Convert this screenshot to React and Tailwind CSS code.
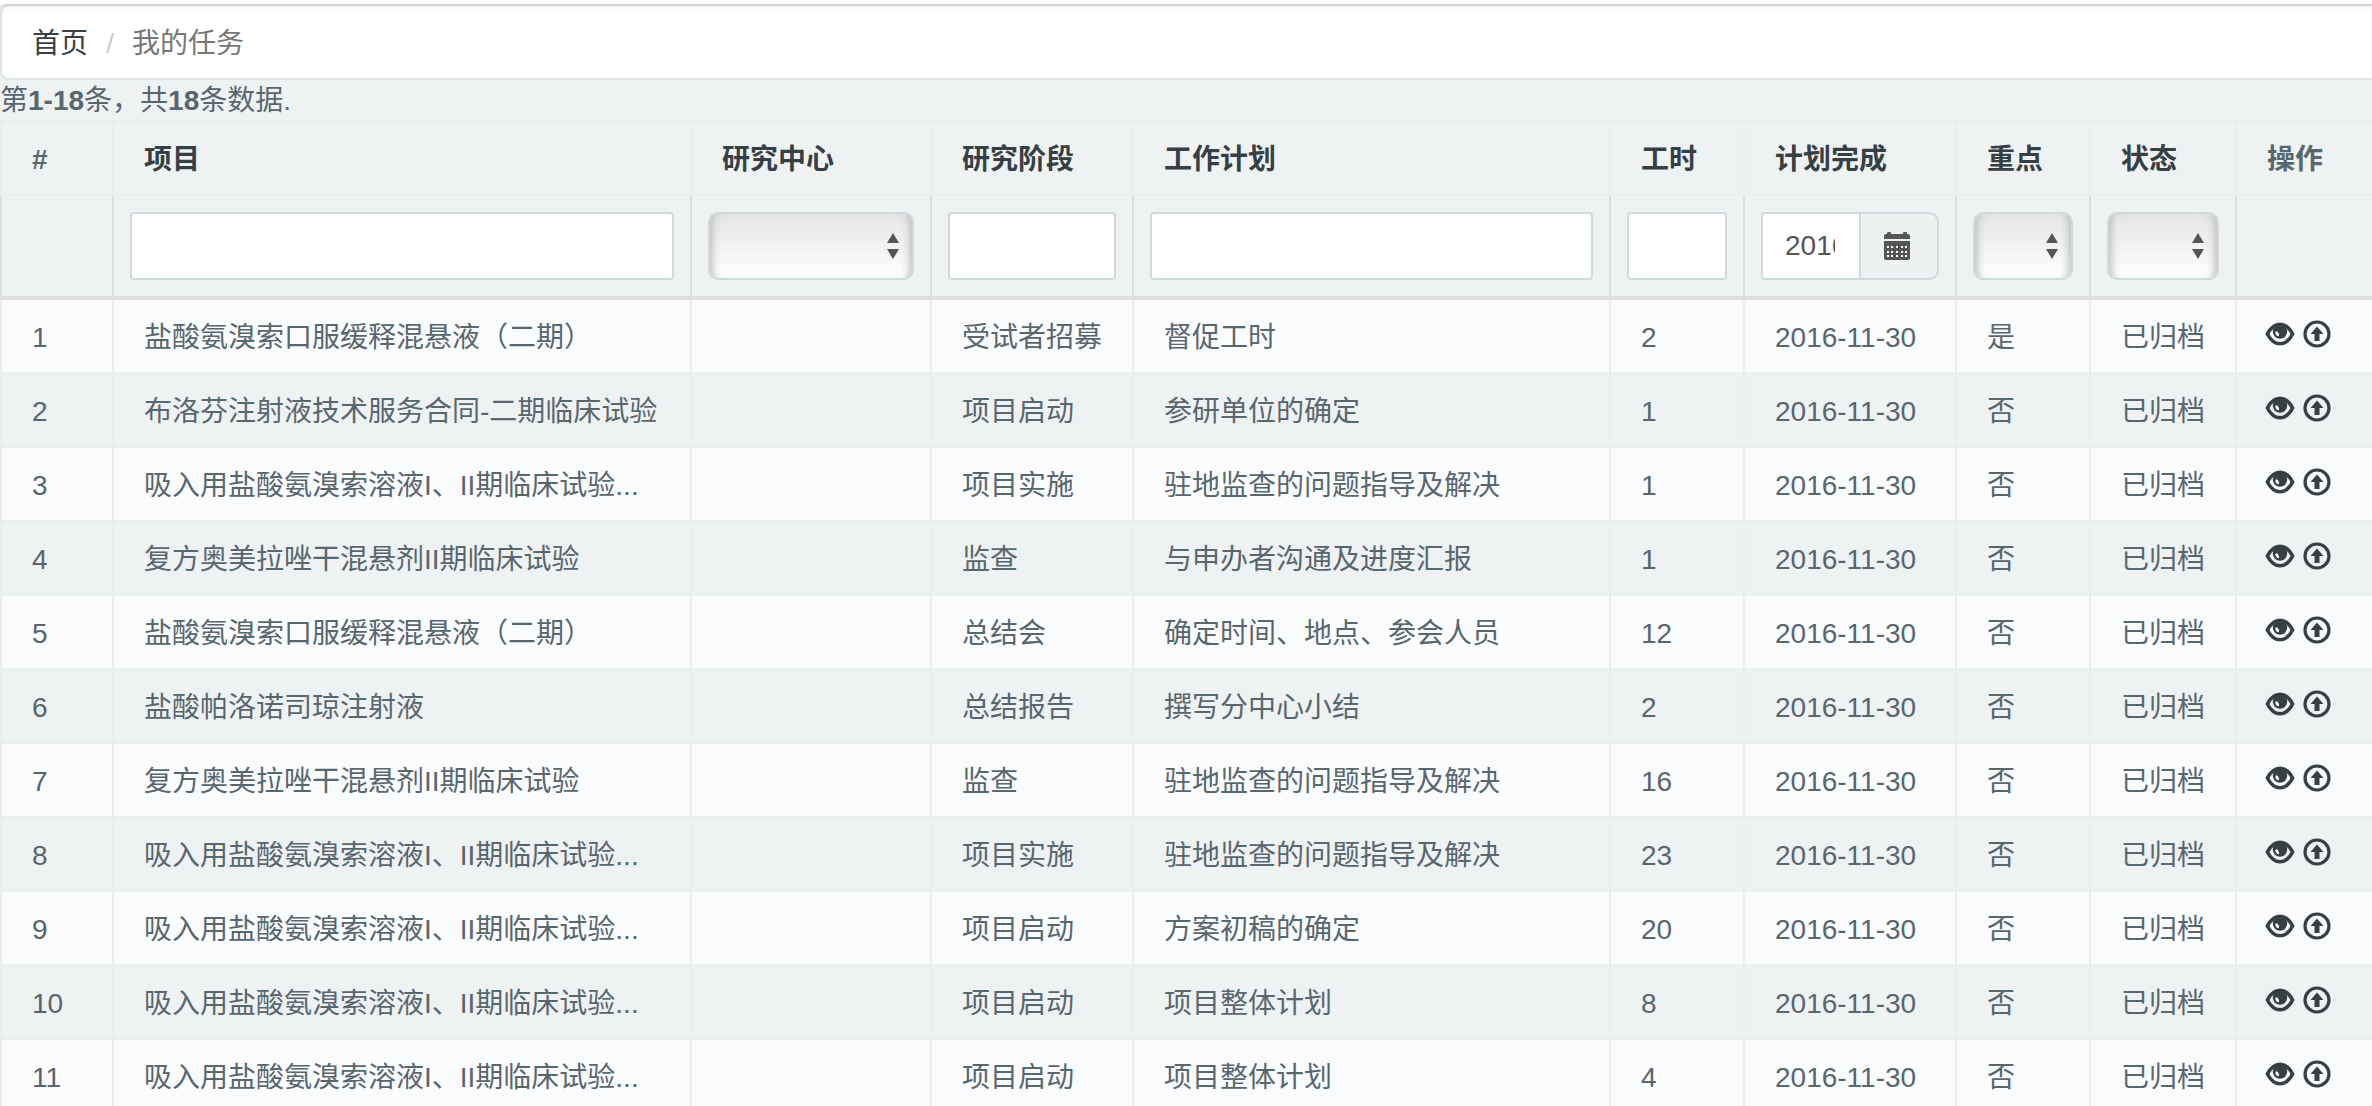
import React, { useState } from "react";

const columns = [
  { key: "id", title: "#", width: "w-[112px]", plain: true },
  { key: "project", title: "项目", width: "w-[578px]", filter: "text" },
  { key: "center", title: "研究中心", width: "w-[240px]", filter: "select" },
  { key: "stage", title: "研究阶段", width: "w-[202px]", filter: "text" },
  { key: "plan", title: "工作计划", width: "", filter: "text" },
  { key: "hours", title: "工时", width: "w-[134px]", filter: "text" },
  { key: "date", title: "计划完成", width: "w-[212px]", filter: "date" },
  { key: "important", title: "重点", width: "w-[134px]", filter: "select", options: ["是", "否"] },
  { key: "status", title: "状态", width: "w-[146px]", filter: "select", options: ["已归档"] },
  { key: "actions", title: "操作", width: "w-[137px]", plain: true },
];

const tasks = [
  { id: 1, project: "盐酸氨溴索口服缓释混悬液（二期）", stage: "受试者招募", plan: "督促工时", hours: 2, important: "是" },
  { id: 2, project: "布洛芬注射液技术服务合同-二期临床试验", stage: "项目启动", plan: "参研单位的确定", hours: 1, important: "否" },
  { id: 3, project: "吸入用盐酸氨溴索溶液I、II期临床试验...", stage: "项目实施", plan: "驻地监查的问题指导及解决", hours: 1, important: "否" },
  { id: 4, project: "复方奥美拉唑干混悬剂II期临床试验", stage: "监查", plan: "与申办者沟通及进度汇报", hours: 1, important: "否" },
  { id: 5, project: "盐酸氨溴索口服缓释混悬液（二期）", stage: "总结会", plan: "确定时间、地点、参会人员", hours: 12, important: "否" },
  { id: 6, project: "盐酸帕洛诺司琼注射液", stage: "总结报告", plan: "撰写分中心小结", hours: 2, important: "否" },
  { id: 7, project: "复方奥美拉唑干混悬剂II期临床试验", stage: "监查", plan: "驻地监查的问题指导及解决", hours: 16, important: "否" },
  { id: 8, project: "吸入用盐酸氨溴索溶液I、II期临床试验...", stage: "项目实施", plan: "驻地监查的问题指导及解决", hours: 23, important: "否" },
  { id: 9, project: "吸入用盐酸氨溴索溶液I、II期临床试验...", stage: "项目启动", plan: "方案初稿的确定", hours: 20, important: "否" },
  { id: 10, project: "吸入用盐酸氨溴索溶液I、II期临床试验...", stage: "项目启动", plan: "项目整体计划", hours: 8, important: "否" },
  { id: 11, project: "吸入用盐酸氨溴索溶液I、II期临床试验...", stage: "项目启动", plan: "项目整体计划", hours: 4, important: "否" },
];

const EyeIcon = () => (
  <svg viewBox="0 0 30 24" className="w-[30px] h-6" aria-hidden="true">
    <path
      d="M2.4 12C5.4 6.2 9.6 2.2 15 2.2S24.6 6.2 27.6 12C24.6 17.8 20.4 21.8 15 21.8S5.4 17.8 2.4 12Z"
      fill="none"
      stroke="currentColor"
      strokeWidth="3.6"
      strokeLinejoin="round"
    />
    <circle cx="15" cy="9.6" r="7.2" fill="currentColor" />
    <ellipse cx="12.2" cy="11.8" rx="1.5" ry="2.7" transform="rotate(-30 12.2 11.8)" fill="#fff" />
  </svg>
);

const UploadIcon = () => (
  <svg viewBox="0 0 28 28" className="w-7 h-7" aria-hidden="true">
    <circle cx="14" cy="14" r="12" fill="none" stroke="currentColor" strokeWidth="3.2" />
    <path d="M14 6.5L20.5 14H16.5V21H11.5V14H7.5Z" fill="currentColor" />
  </svg>
);

const CalendarIcon = () => (
  <svg viewBox="0 0 26 28" className="w-[26px] h-7" aria-hidden="true">
    <path d="M0 7V4Q0 2 2 2H3V1Q3 0 4 0H6Q7 0 7 1V2H19V1Q19 0 20 0H22Q23 0 23 1V2H24Q26 2 26 4V7Z" fill="currentColor" />
    <path d="M0 9H26V26Q26 28 24 28H2Q0 28 0 26Z" fill="currentColor" />
    {[14, 19, 23].map((y) =>
      [3, 7, 12, 17, 21].map((x) => (
        <rect key={`${x}-${y}`} x={x} y={y} width="2" height="2" fill="#fff" />
      ))
    )}
  </svg>
);

const Filter = ({ column }) => {
  const [value, setValue] = useState(column.filter === "date" ? "2016-11-30" : "");
  const onChange = (e) => setValue(e.target.value);

  if (column.filter === "select") {
    return (
      <div className="relative">
        <select
          aria-label={column.title}
          value={value}
          onChange={onChange}
          className="block w-full h-[68px] appearance-none rounded-[10px] border-2 border-[#cfdadd] bg-linear-to-b from-[#e5e5e5] to-white pl-4 pr-8 text-[#555] shadow-[inset_10px_0_8px_-8px_#b8b8b8,inset_-10px_0_8px_-8px_#b8b8b8]"
        >
          <option value=""></option>
          {(column.options || []).map((o) => (
            <option key={o}>{o}</option>
          ))}
        </select>
        <svg
          viewBox="0 0 12 26"
          className="pointer-events-none absolute right-[15px] top-[21px] w-3 h-[26px] text-[#555]"
          aria-hidden="true"
        >
          <path d="M6 0L12 10H0ZM6 26L12 16H0Z" fill="currentColor" />
        </svg>
      </div>
    );
  }

  if (column.filter === "date") {
    return (
      <div className="flex">
        <input
          aria-label={column.title}
          value={value}
          onChange={onChange}
          className="min-w-0 flex-1 h-[68px] rounded-l border-2 border-r-0 border-[#cfdadd] bg-white pl-[22px] pr-6 text-[#555]"
        />
        <button
          type="button"
          aria-label="选择日期"
          className="flex w-20 shrink-0 items-center justify-center rounded-r-[10px] border-2 border-[#cfdadd] bg-[#edf1f2] pr-1 text-[#555]"
        >
          <CalendarIcon />
        </button>
      </div>
    );
  }

  return (
    <input
      aria-label={column.title}
      value={value}
      onChange={onChange}
      className="block w-full h-[68px] rounded border-2 border-[#cfdadd] bg-white px-[22px] text-[#555]"
    />
  );
};

const App = () => {
  return (
    <div className="h-screen overflow-hidden bg-[#eef2f3] font-['Liberation_Sans','Noto_Sans_CJK_SC',sans-serif] text-[28px] leading-10 text-[#58666e]">
      <div className="h-1 bg-white"></div>
      <nav className="rounded-l-lg border-2 border-r-0 border-[#dee5e7] border-t-[#cdd2d4] bg-white px-[30px] pt-[18px] pb-[14px] shadow-[inset_0_2px_4px_#0000000d]">
        <ol className="flex">
          <li>
            <a href="#" className="text-[#363f44]">
              首页
            </a>
          </li>
          <li className="flex text-[#777]">
            <span className="w-11 text-center text-[#ccc]">/</span>
            我的任务
          </li>
        </ol>
      </nav>
      <p className="pt-[2px] leading-[38px]">
        第<b>1-18</b>条，共<b>18</b>条数据.
      </p>
      <table className="w-full table-fixed border-separate border-spacing-0 border-t-2 border-[#e9eeef]">
        <thead className="text-left">
          <tr>
            {columns.map((column) => (
              <th
                key={column.key}
                scope="col"
                className={`${column.width} h-[74px] border-l-2 border-b-2 border-[#e9eeef] px-[30px] pt-1 pb-0`}
              >
                {column.plain ? (
                  column.title
                ) : (
                  <a href="#" className="text-[#363f44]">
                    {column.title}
                  </a>
                )}
              </th>
            ))}
          </tr>
          <tr>
            {columns.map((column) => (
              <td
                key={column.key}
                className="h-[104px] border-l-2 border-b-4 border-[#ddd] px-4 py-0"
              >
                {column.filter && <Filter column={column} />}
              </td>
            ))}
          </tr>
        </thead>
        <tbody>
          {tasks.map((task) => (
            <tr key={task.id} className="odd:bg-[#fafbfc]">
              {columns.map((column) =>
                column.key === "actions" ? (
                  <td key={column.key} className="h-[74px] border-l-2 border-b-2 border-[#e9eeef] pl-7 pt-0 pb-1">
                    <div className="flex items-center gap-2 text-[#363f44]">
                      <a href="#" aria-label="查看">
                        <EyeIcon />
                      </a>
                      <a href="#" aria-label="归档">
                        <UploadIcon />
                      </a>
                    </div>
                  </td>
                ) : (
                  <td
                    key={column.key}
                    className="h-[74px] whitespace-nowrap border-l-2 border-b-2 border-[#e9eeef] pl-[30px] pt-1 pb-0"
                  >
                    {column.key === "date" && "2016-11-30"}
                    {column.key === "status" && "已归档"}
                    {task[column.key]}
                  </td>
                )
              )}
            </tr>
          ))}
        </tbody>
      </table>
    </div>
  );
};

export default App;
